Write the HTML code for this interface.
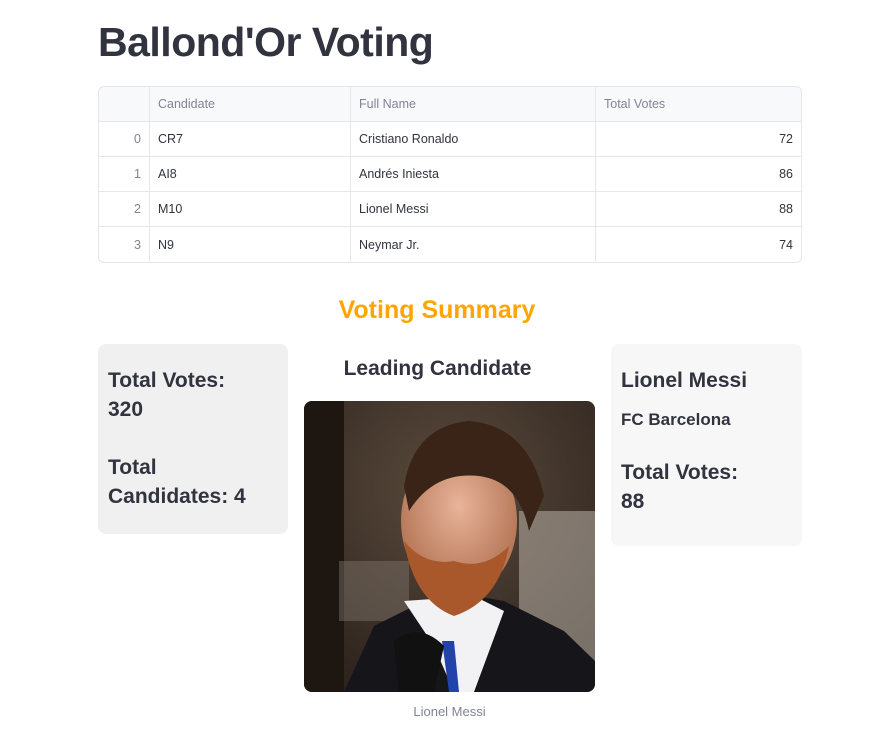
<!DOCTYPE html>
<html><head><meta charset="utf-8"><style>
*{margin:0;padding:0;box-sizing:border-box}
body{width:886px;height:742px;background:#fff;font-family:"Liberation Sans",sans-serif;color:#31333f;position:relative;overflow:hidden}
.a{position:absolute}
h1{position:absolute;left:98px;top:19px;font-size:41px;font-weight:bold;letter-spacing:-0.5px;color:#31333f}
table{position:absolute;left:98px;top:86px;width:704px;border-collapse:separate;border-spacing:0;border:1px solid #e6e6ea;border-radius:6px;font-size:12.5px;overflow:hidden}
td,th{height:35px;border-bottom:1px solid #e6e6ea;border-right:1px solid #e6e6ea;padding:0 8px;text-align:left;font-weight:normal}
th{background:#f8f9fb;color:#808495}
tr:last-child td{border-bottom:none}
td:last-child,th:last-child{border-right:none}
td.i{color:#808495;text-align:right}
td.n{text-align:right}
.box{position:absolute;border-radius:8px;padding:0 10px}
.big{font-size:21px;font-weight:bold;line-height:29px}
</style></head><body>
<h1>Ballond'Or Voting</h1>
<table>
<tr><th style="width:51px"></th><th style="width:201px">Candidate</th><th style="width:245px">Full Name</th><th>Total Votes</th></tr>
<tr><td class="i">0</td><td>CR7</td><td>Cristiano Ronaldo</td><td class="n">72</td></tr>
<tr><td class="i">1</td><td>AI8</td><td>Andrés Iniesta</td><td class="n">86</td></tr>
<tr><td class="i">2</td><td>M10</td><td>Lionel Messi</td><td class="n">88</td></tr>
<tr><td class="i">3</td><td>N9</td><td>Neymar Jr.</td><td class="n">74</td></tr>
</table>
<div class="a" style="left:0;width:874px;top:296px;text-align:center;font-size:25px;font-weight:bold;color:#ffa500">Voting Summary</div>
<div class="box" style="left:98px;top:344px;width:190px;height:190px;background:#f0f0f0">
<div class="big" style="margin-top:22px">Total Votes:<br>320</div>
<div class="big" style="margin-top:29px">Total<br>Candidates: 4</div>
</div>
<div class="a" style="left:292px;width:291px;top:357px;text-align:center;font-size:21px;font-weight:bold">Leading Candidate</div>
<svg class="a" style="left:304px;top:401px" width="291" height="291" viewBox="0 0 291 291">
<defs>
<clipPath id="c"><rect width="291" height="291" rx="8"/></clipPath>
<radialGradient id="bg" cx="0.5" cy="0.3" r="0.8"><stop offset="0" stop-color="#5a4a3c"/><stop offset="1" stop-color="#2a211b"/></radialGradient>
<radialGradient id="sk" cx="0.5" cy="0.4" r="0.6"><stop offset="0" stop-color="#e8b49a"/><stop offset="1" stop-color="#b07050"/></radialGradient>
</defs>
<g clip-path="url(#c)">
<rect width="291" height="291" fill="url(#bg)"/>
<rect x="0" y="0" width="40" height="291" fill="#1e1611"/>
<rect x="215" y="110" width="76" height="150" fill="#b8b0a8" opacity="0.55"/>
<rect x="35" y="160" width="70" height="60" fill="#8a7f75" opacity="0.4"/>
<path d="M40 291 L70 225 L140 190 L200 200 L260 230 L291 260 L291 291Z" fill="#15151a"/>
<path d="M100 200 L130 245 L150 291 L170 291 L200 210 L170 195Z" fill="#f2f2f4"/>
<path d="M138 240 L145 291 L155 291 L150 240Z" fill="#2244aa"/>
<ellipse cx="155" cy="120" rx="58" ry="75" fill="url(#sk)"/>
<path d="M100 140 Q110 200 150 215 Q195 200 205 145 Q180 170 150 160 Q120 165 100 140Z" fill="#a8582a"/>
<path d="M100 85 Q110 25 165 20 Q225 25 240 95 L225 130 Q215 80 175 75 Q130 70 105 110Z" fill="#3a2418"/>
<path d="M90 240 Q115 220 140 245 L130 291 L95 291Z" fill="#111"/>
</g>
</svg>
<div class="a" style="left:304px;width:291px;top:704px;text-align:center;font-size:13px;color:#808495">Lionel Messi</div>
<div class="box" style="left:611px;top:344px;width:191px;height:202px;background:#f7f7f7">
<div class="big" style="margin-top:22px">Lionel Messi</div>
<div style="margin-top:15px;font-size:17px;font-weight:bold">FC Barcelona</div>
<div class="big" style="margin-top:28px">Total Votes:<br>88</div>
</div>
</body></html>
